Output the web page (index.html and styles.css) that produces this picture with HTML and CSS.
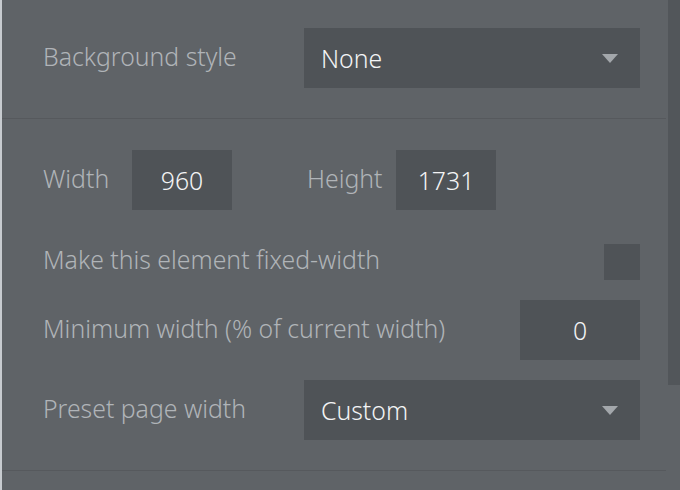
FILE: index.html
```html
<!DOCTYPE html>
<html>
<head>
<meta charset="utf-8">
<link rel="stylesheet" href="styles.css">
</head>
<body>
<div class="panel">
  <div class="content">
    <section class="section first">
      <div class="row">
        <span class="label">Background style</span>
        <div class="select"><span class="value">None</span><span class="caret"></span></div>
      </div>
    </section>
    <section class="section second">
      <div class="dims">
        <span class="label">Width</span>
        <div class="input">960</div>
        <span class="label">Height</span>
        <div class="input">1731</div>
      </div>
      <div class="row check-row">
        <span class="label">Make this element fixed-width</span>
        <div class="checkbox"></div>
      </div>
      <div class="row">
        <span class="label">Minimum width (% of current width)</span>
        <div class="input wide">0</div>
      </div>
      <div class="row">
        <span class="label">Preset page width</span>
        <div class="select"><span class="value">Custom</span><span class="caret"></span></div>
      </div>
    </section>
  </div>
  <div class="track"><div class="thumb"></div></div>
</div>
</body>
</html>
```
FILE: styles.css
```css
html, body {
  margin: 0;
  padding: 0;
  height: 100%;
  background: #5f6367;
  overflow: hidden;
}
.panel {
  position: relative;
  display: flex;
  height: 490px;
  border-left: 2px solid #c7cbcf;
  background: #5f6367;
  font-family: "Noto Sans", "Open Sans", sans-serif;
  font-weight: 300;
}
.content {
  width: 664px;
  flex: none;
}
.track {
  flex: 1;
  position: relative;
}
.thumb {
  position: absolute;
  left: 2px;
  right: 0;
  top: 0;
  height: 385px;
  background: #52565a;
}
.section {
  padding: 0 26px 0 41px;
  border-bottom: 1px solid #56595d;
}
.section.first {
  padding-top: 28px;
  padding-bottom: 30px;
}
.section.second {
  padding-top: 31px;
  padding-bottom: 30px;
  display: flex;
  flex-direction: column;
}
.row {
  display: flex;
  align-items: center;
  justify-content: space-between;
}
.label {
  color: #b0b4b8;
  font-size: 24.8px;
  line-height: 30px;
  padding-bottom: 4px;
}
.check-row .label {
  line-height: 26px;
  padding-bottom: 7px;
}
.select {
  width: 336px;
  height: 60px;
  background: #4f5357;
  display: flex;
  align-items: center;
  justify-content: space-between;
  padding: 0 22px 0 17px;
  box-sizing: border-box;
}
.value {
  color: #f3f4f5;
  font-size: 24.8px;
  line-height: 30px;
}
.caret {
  width: 0;
  height: 0;
  border-left: 8px solid transparent;
  border-right: 8px solid transparent;
  border-top: 9px solid #a3a7ab;
}
.dims {
  display: grid;
  grid-template-columns: 89px 100px 75px 89px 100px;
  align-items: center;
}
.dims .label:nth-of-type(2) {
  grid-column: 4;
}
.input {
  height: 60px;
  width: 100px;
  background: #4f5357;
  color: #f3f4f5;
  font-size: 24.8px;
  display: flex;
  align-items: center;
  justify-content: center;
}
.input.wide {
  width: 120px;
}
.check-row {
  margin-top: 34px;
  margin-bottom: 20px;
}
.checkbox {
  width: 36px;
  height: 36px;
  background: #4f5357;
}
.check-row + .row {
  margin-bottom: 20px;
}
```
